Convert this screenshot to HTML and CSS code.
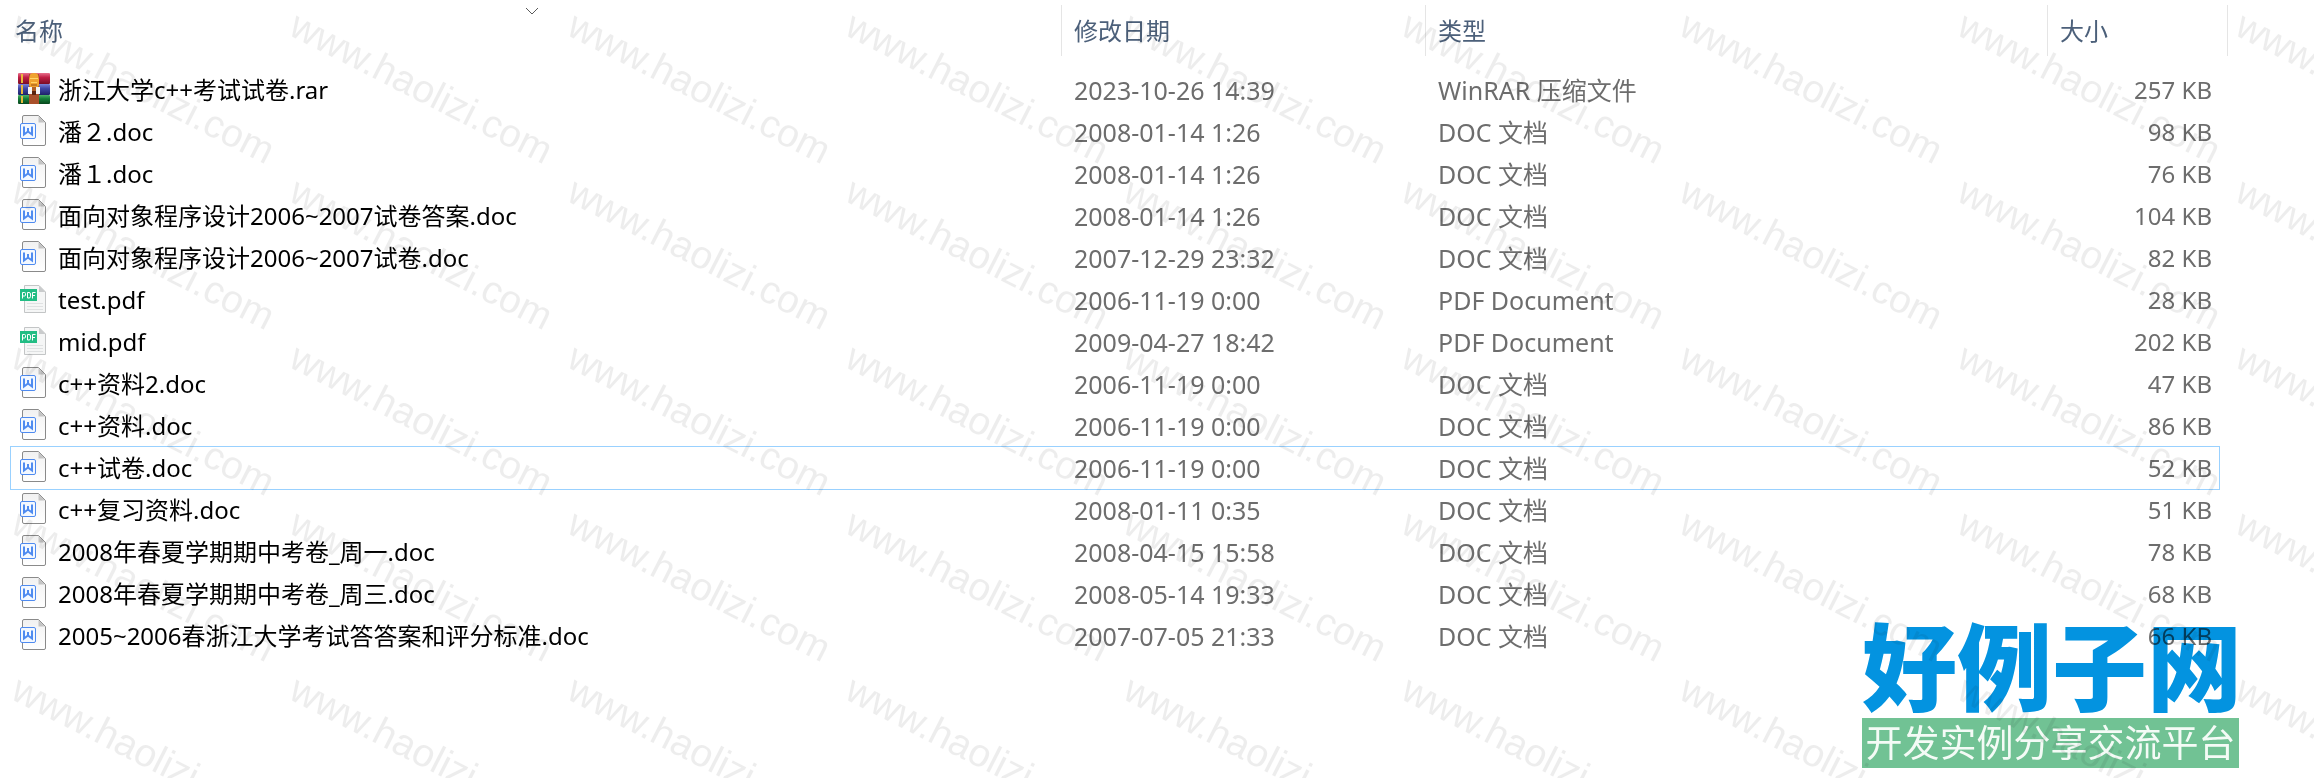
FILE: index.html
```
<!DOCTYPE html>
<html lang="zh-CN">
<head>
<meta charset="utf-8">
<title>文件列表</title>
<link rel="stylesheet" href="styles.css">
</head>
<body>
<svg class="defs" aria-hidden="true">
  <defs>
    <linearGradient id="paper" x1="0" y1="0" x2="0" y2="1"><stop offset="0" stop-color="#f1f1f1"/><stop offset="1" stop-color="#ffffff"/></linearGradient>
    <linearGradient id="red" x1="0" y1="0" x2="0" y2="1"><stop offset="0" stop-color="#e8708c"/><stop offset=".4" stop-color="#c01f45"/><stop offset="1" stop-color="#7a0d26"/></linearGradient>
    <linearGradient id="blue" x1="0" y1="0" x2="0" y2="1"><stop offset="0" stop-color="#7d84d8"/><stop offset=".4" stop-color="#4048a8"/><stop offset="1" stop-color="#1d2268"/></linearGradient>
    <linearGradient id="green" x1="0" y1="0" x2="0" y2="1"><stop offset="0" stop-color="#4fb36a"/><stop offset=".4" stop-color="#16803a"/><stop offset="1" stop-color="#07461c"/></linearGradient>
    <symbol id="doc" viewBox="0 2 32 32">
      <path d="M4.500 3a1.500 1.500 0 0 1 1.500-1.500H20.500L27.500 8.500V30a1.500 1.500 0 0 1-1.500 1.500H6A1.500 1.500 0 0 1 4.500 30Z" fill="url(#paper)" stroke="#8a8a8a"/>
      <path d="M20.500 2V8.500H27Z" fill="#c4c4c4"/>
      <rect x="2.500" y="9.500" width="15" height="15" rx="1.500" fill="#f3f8ff" stroke="#4f8bf0"/>
      <path d="M6 12.500V20.500L10 17.500L14 20.500V12.500M10 14V18" fill="none" stroke="#4f8bf0" stroke-width="2"/>
    </symbol>
    <symbol id="pdf" viewBox="0 0 32 32">
      <path d="M6.500 1.500H21L27.500 8V28.500H6.500Z" fill="#f5f6f6" stroke="#c3c5c6"/>
      <path d="M21 1.500V8H27.500Z" fill="#c9cbcc"/>
      <path d="M9 19.500H25M9 22.500H25M9 25.500H25" stroke="#dfe1e2"/>
      <rect x="2" y="5" width="17" height="12" fill="#22bd84"/>
      <path d="M4.500 14.500V8.500H6.500a1 1 0 0 1 1 1V11a1 1 0 0 1-1 1H4.500M9.500 8.500H11a1.500 1.500 0 0 1 1.500 1.500V12.500A1.500 1.500 0 0 1 11 14H9.500ZM14.500 14.500V8.500H17.500M14.500 11.500H17" fill="none" stroke="#fff"/>
    </symbol>
    <symbol id="rar" viewBox="0 2 32 32">
      <rect y="1" width="32" height="11" rx="1" fill="url(#red)"/>
      <rect y="12" width="32" height="11" rx="1" fill="url(#blue)"/>
      <rect y="23" width="32" height="9" rx="1" fill="url(#green)"/>
      <path d="M4 2V11M4 13V22M4 24V31" stroke="#e8b93a" stroke-width="2"/>
      <path d="M11 2H21V32H11Z" fill="#a9502a"/>
      <path d="M11 7L12 3a4 2 0 0 1 8 0L21 7V13a5 3 0 0 1-10 0Z" fill="#f0a32f"/>
      <path d="M12 6.500H20M13 10.500H19" stroke="#ffd46a"/>
      <path d="M13 13H19" stroke="#9a4f16"/>
      <path d="M10 15H14V22H10ZM18 15H22V22H18Z" fill="#f4f4f4"/>
      <path d="M14 15H18V21H14Z" fill="#b0612a"/>
      <path d="M14 19H18V23H14Z" fill="#5b240e"/>
    </symbol>
    <pattern id="mark" width="278" height="166" patternUnits="userSpaceOnUse">
      <text class="mark-text" transform="translate(9 34) rotate(27)">www.haolizi.com</text>
    </pattern>
  </defs>
</svg>

<main class="explorer">
  <table class="files">
    <colgroup><col><col class="col-date"><col class="col-type"><col class="col-size"></colgroup>
    <thead>
      <tr>
        <th scope="col">名称<svg class="sort" viewBox="0 0 14 8" aria-hidden="true"><path d="M1 1L7 7L13 1"/></svg></th>
        <th scope="col">修改日期</th>
        <th scope="col">类型</th>
        <th scope="col">大小</th>
      </tr>
    </thead>
    <tbody>
      <tr><td><div class="name"><svg class="icon"><use href="#rar"/></svg>浙江大学c++考试试卷.rar</div></td><td class="meta">2023-10-26 14:39</td><td class="meta">WinRAR 压缩文件</td><td class="size">257 KB</td></tr>
      <tr><td><div class="name"><svg class="icon"><use href="#doc"/></svg>潘２.doc</div></td><td class="meta">2008-01-14 1:26</td><td class="meta">DOC 文档</td><td class="size">98 KB</td></tr>
      <tr><td><div class="name"><svg class="icon"><use href="#doc"/></svg>潘１.doc</div></td><td class="meta">2008-01-14 1:26</td><td class="meta">DOC 文档</td><td class="size">76 KB</td></tr>
      <tr><td><div class="name"><svg class="icon"><use href="#doc"/></svg>面向对象程序设计2006~2007试卷答案.doc</div></td><td class="meta">2008-01-14 1:26</td><td class="meta">DOC 文档</td><td class="size">104 KB</td></tr>
      <tr><td><div class="name"><svg class="icon"><use href="#doc"/></svg>面向对象程序设计2006~2007试卷.doc</div></td><td class="meta">2007-12-29 23:32</td><td class="meta">DOC 文档</td><td class="size">82 KB</td></tr>
      <tr><td><div class="name"><svg class="icon"><use href="#pdf"/></svg>test.pdf</div></td><td class="meta">2006-11-19 0:00</td><td class="meta">PDF Document</td><td class="size">28 KB</td></tr>
      <tr><td><div class="name"><svg class="icon"><use href="#pdf"/></svg>mid.pdf</div></td><td class="meta">2009-04-27 18:42</td><td class="meta">PDF Document</td><td class="size">202 KB</td></tr>
      <tr><td><div class="name"><svg class="icon"><use href="#doc"/></svg>c++资料2.doc</div></td><td class="meta">2006-11-19 0:00</td><td class="meta">DOC 文档</td><td class="size">47 KB</td></tr>
      <tr><td><div class="name"><svg class="icon"><use href="#doc"/></svg>c++资料.doc</div></td><td class="meta">2006-11-19 0:00</td><td class="meta">DOC 文档</td><td class="size">86 KB</td></tr>
      <tr class="focused"><td><div class="name"><svg class="icon"><use href="#doc"/></svg>c++试卷.doc</div></td><td class="meta">2006-11-19 0:00</td><td class="meta">DOC 文档</td><td class="size">52 KB</td></tr>
      <tr><td><div class="name"><svg class="icon"><use href="#doc"/></svg>c++复习资料.doc</div></td><td class="meta">2008-01-11 0:35</td><td class="meta">DOC 文档</td><td class="size">51 KB</td></tr>
      <tr><td><div class="name"><svg class="icon"><use href="#doc"/></svg>2008年春夏学期期中考卷_周一.doc</div></td><td class="meta">2008-04-15 15:58</td><td class="meta">DOC 文档</td><td class="size">78 KB</td></tr>
      <tr><td><div class="name"><svg class="icon"><use href="#doc"/></svg>2008年春夏学期期中考卷_周三.doc</div></td><td class="meta">2008-05-14 19:33</td><td class="meta">DOC 文档</td><td class="size">68 KB</td></tr>
      <tr><td><div class="name"><svg class="icon"><use href="#doc"/></svg>2005~2006春浙江大学考试答答案和评分标准.doc</div></td><td class="meta">2007-07-05 21:33</td><td class="meta">DOC 文档</td><td class="size">66 KB</td></tr>
    </tbody>
  </table>
  <div class="brand">
    <div class="brand-name">好例子网</div>
    <div class="brand-line">开发实例分享交流平台</div>
  </div>
  <svg class="watermark" aria-hidden="true"><rect width="100%" height="100%" fill="url(#mark)"/></svg>
</main>
</body>
</html>
```
FILE: styles.css
```
* { box-sizing: border-box; }
body {
  margin: 0;
  background: #fff;
  font: 24px/32px "Noto Sans", "Noto Sans CJK SC", sans-serif;
  color: #6d6d6d;
}
symbol { overflow: visible; }
.defs { position: absolute; width: 0; height: 0; }
.explorer {
  position: relative;
  min-height: 100vh;
  padding: 5px 86px 0 0;
  overflow: hidden;
}
.files {
  width: 100%;
  table-layout: fixed;
  border-collapse: separate;
  border-spacing: 0;
}
.col-date { width: 364px; }
.col-type { width: 622px; }
.col-size { width: 180px; }
th {
  position: relative;
  height: 64px;
  padding: 0 12px 13px;
  background: linear-gradient(#e5e5e5, #e5e5e5) right top / 1px 51px no-repeat;
  font-weight: 400;
  text-align: left;
  color: #4c607a;
}
th:first-child { padding-left: 15px; }
.sort {
  position: absolute;
  top: 2px;
  left: 50%;
  width: 14px;
  height: 8px;
  margin-left: -6px;
  fill: none;
  stroke: #5a5a5a;
}
td { height: 42px; padding: 0 12px; white-space: nowrap; }
td:first-child { padding-left: 18px; color: #000; }
.name { display: flex; align-items: center; gap: 8px; }
.icon { width: 32px; height: 32px; flex: none; overflow: visible; }
.meta { font-size: 25px; }
.size { padding-right: 16px; text-align: right; }
.focused { position: relative; }
.focused .name::after {
  content: "";
  position: absolute;
  inset: -1px 8px -1px 10px;
  border: 1px solid #99d1ff;
}
.brand {
  position: absolute;
  right: 75px;
  bottom: 10px;
  width: 377px;
  font-family: "Noto Sans CJK SC", sans-serif;
  text-align: center;
  white-space: nowrap;
  mix-blend-mode: multiply;
}
.brand-name {
  padding-bottom: 6px;
  font-size: 95px;
  line-height: 98px;
  font-weight: 900;
  color: #0393e0;
}
.brand-line {
  padding-bottom: 4px;
  font-size: 37px;
  line-height: 46px;
  color: #f4fbf6;
  background: #71c294;
}
.watermark {
  position: absolute;
  inset: 0;
  width: 100%;
  height: 100%;
  pointer-events: none;
}
.mark-text {
  font: 39px "Liberation Sans", Arial, sans-serif;
  fill: rgba(0, 0, 0, .07);
}
```
